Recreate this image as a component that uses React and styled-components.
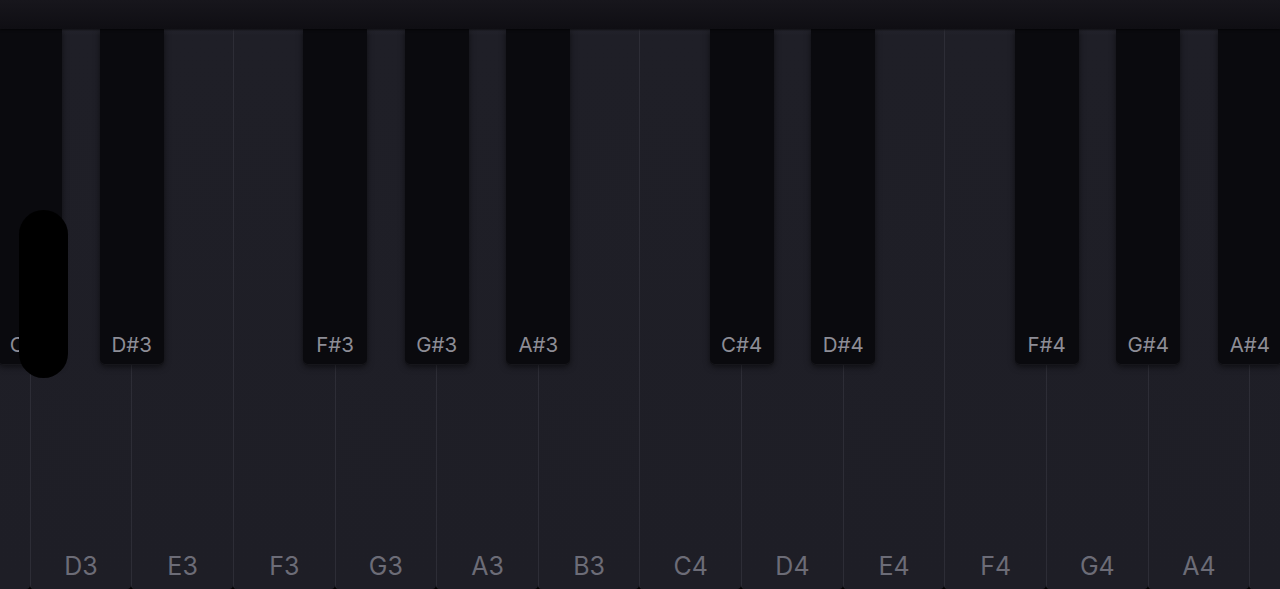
import React from 'react';
import styled, { createGlobalStyle } from 'styled-components';

const WHITE_W = 101.65;
const BLACK_W = 64;

const whiteKeys = [
  { note: 'C3', sharp: 'C#3' },
  { note: 'D3', sharp: 'D#3' },
  { note: 'E3' },
  { note: 'F3', sharp: 'F#3' },
  { note: 'G3', sharp: 'G#3' },
  { note: 'A3', sharp: 'A#3' },
  { note: 'B3' },
  { note: 'C4', sharp: 'C#4' },
  { note: 'D4', sharp: 'D#4' },
  { note: 'E4' },
  { note: 'F4', sharp: 'F#4' },
  { note: 'G4', sharp: 'G#4' },
  { note: 'A4', sharp: 'A#4' },
  { note: 'B4', sharp: 'C5' },
];

const App = () => (
  <>
    <GlobalStyle />
    <Screen>
      <TopBar />
      <Keyboard>
        <KeyRow>
          {whiteKeys.map((k) => (
            <WhiteKey key={k.note}>
              <WhiteLabel>{k.note}</WhiteLabel>
              {k.sharp && (
                <BlackKey>
                  <BlackLabel>{k.sharp}</BlackLabel>
                </BlackKey>
              )}
            </WhiteKey>
          ))}
        </KeyRow>
        <ScrollThumb />
      </Keyboard>
    </Screen>
  </>
);

const GlobalStyle = createGlobalStyle`
  html, body {
    margin: 0;
    padding: 0;
    background: #000;
    overflow: hidden;
  }
  body {
    font-family: 'Inter', 'Liberation Sans', sans-serif;
  }
`;

const Screen = styled.div`
  display: flex;
  flex-direction: column;
  width: 1280px;
  height: 589px;
  overflow: hidden;
  background: #000;
`;

const TopBar = styled.div`
  flex: 0 0 29px;
  background: linear-gradient(#17161c, #0f0e13);
  position: relative;
  z-index: 3;
  box-shadow: 0 1px 2px rgba(0, 0, 0, 0.6);
`;

const Keyboard = styled.div`
  flex: 1;
  position: relative;
  overflow: hidden;
`;

const KeyRow = styled.div`
  display: flex;
  height: 100%;
  margin-left: -72px;
`;

const WhiteKey = styled.div`
  flex: 0 0 ${WHITE_W}px;
  position: relative;
  display: flex;
  align-items: flex-end;
  justify-content: center;
  box-sizing: border-box;
  border-left: 1px solid #2d2d36;
  border-radius: 0 0 4px 4px;
  background: linear-gradient(#25252e 0px, #1f1f27 6px, #1e1e26 100%);
`;

const WhiteLabel = styled.span`
  font-size: 25px;
  line-height: 1;
  color: #6c6c77;
  padding-bottom: 10px;
`;

const BlackKey = styled.div`
  position: absolute;
  top: 0;
  right: -${BLACK_W / 2 + 0.5}px;
  width: ${BLACK_W}px;
  height: 336px;
  z-index: 2;
  display: flex;
  align-items: flex-end;
  justify-content: center;
  background: #0a0a0e;
  border-radius: 0 0 5px 5px;
  box-shadow: 0 2px 6px rgba(0, 0, 0, 0.55), inset 0 -1px 0 #16161b;
`;

const BlackLabel = styled.span`
  font-size: 20.5px;
  line-height: 1;
  color: #8d8d96;
  padding-bottom: 10px;
`;

const ScrollThumb = styled.div`
  position: absolute;
  left: 19px;
  top: 181px;
  width: 49px;
  height: 168px;
  border-radius: 25px;
  background: #000;
  z-index: 4;
`;

export default App;
